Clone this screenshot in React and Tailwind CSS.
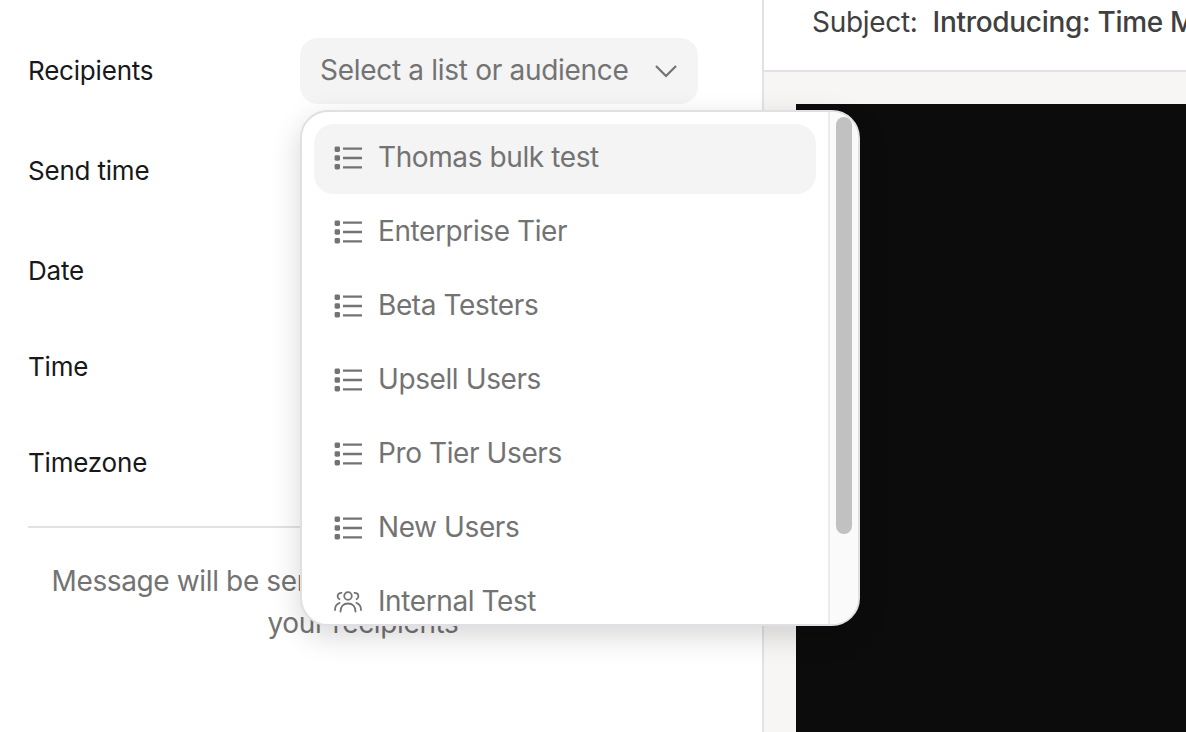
import React from "react";

const listItems = [
    { name: "Thomas bulk test", active: true },
    { name: "Enterprise Tier" },
    { name: "Beta Testers" },
    { name: "Upsell Users" },
    { name: "Pro Tier Users" },
    { name: "New Users" },
    { name: "Internal Test", audience: true },
];

const ListIcon = () => (
    <svg width="28" height="24" viewBox="0 0 28 24" fill="none" className="mt-[2px] shrink-0">
        <rect x="0.6" y="0.6" width="5.4" height="5.4" rx="1.4" fill="#737373" />
        <rect x="0.6" y="9.3" width="5.4" height="5.4" rx="1.4" fill="#737373" />
        <rect x="0.6" y="18" width="5.4" height="5.4" rx="1.4" fill="#737373" />
        <path d="M9 2.6H28M9 12H28M9 21.4H28" stroke="#737373" strokeWidth="2.4" />
    </svg>
);

const AudienceIcon = () => (
    <svg width="28" height="24" viewBox="0 0 28 24" fill="none" stroke="#737373" strokeWidth="1.8" strokeLinecap="round" className="mt-[2px] shrink-0">
        <circle cx="14" cy="6" r="3.8" />
        <path d="M6.5 21.5C6.5 16.5 9.5 13.5 14 13.5C18.5 13.5 21.5 16.5 21.5 21.5" />
        <path d="M7.5 2.8C5 2.8 3.6 4.4 3.6 6.2C3.6 7.6 4.4 8.6 5.4 9.2" />
        <path d="M20.5 2.8C23 2.8 24.4 4.4 24.4 6.2C24.4 7.6 23.6 8.6 22.6 9.2" />
        <path d="M1 20C1 16.4 2.6 13.8 5.6 12.8" />
        <path d="M27 20C27 16.4 25.4 13.8 22.4 12.8" />
    </svg>
);

const Dropdown = () => (
    <div className="absolute left-[300px] top-[110px] z-10 flex h-[516px] w-[560px] overflow-hidden rounded-[28px] border-2 border-[#e0e0e4] bg-white shadow-[0_10px_30px_rgba(0,0,0,0.16)]">
        <div className="flex flex-1 flex-col gap-[4px] overflow-hidden pl-[12px] pr-[12px] pt-[12px]">
            {listItems.map((item) => (
                <div
                    key={item.name}
                    className={`flex h-[70px] shrink-0 items-center gap-[16px] rounded-[20px] pb-[4px] pl-[20px] ${item.active ? "bg-[#f4f4f4]" : ""}`}
                >
                    {item.audience ? <AudienceIcon /> : <ListIcon />}
                    <span className="text-[28px] tracking-[-0.4px] text-[#737373]">{item.name}</span>
                </div>
            ))}
        </div>
        <div className="w-[30px] shrink-0 border-l-2 border-[#ebebeb] bg-[#fafafa] pl-[6px] pt-[5px]">
            <div className="h-[417px] w-[16px] rounded-full bg-[#c1c1c1]" />
        </div>
    </div>
);

const Row = ({ label, className }) => (
    <div className={`flex h-[66px] items-center pb-[2px] text-[26px] tracking-[-0.2px] text-[#18181b] ${className}`}>{label}</div>
);

export default function App() {
    return (
        <div className="relative flex h-[732px] w-[1186px] overflow-hidden bg-white font-['Inter',sans-serif] antialiased">
            <div className="w-[764px] shrink-0 border-r-2 border-[#e2e2e6] pl-[28px] pr-[64px] pt-[38px]">
                <div className="flex h-[66px] items-center justify-between">
                    <span className="pb-[2px] text-[26px] tracking-[-0.2px] text-[#18181b]">Recipients</span>
                    <div className="flex h-[66px] w-[398px] items-center justify-between rounded-[18px] bg-[#f4f4f4] pb-[2px] pl-[20px] pr-[20px] text-[28px] tracking-[-0.3px] text-[#737373]">
                        <span>Select a list or audience</span>
                        <svg width="24" height="14" viewBox="0 0 24 14" fill="none" stroke="#737373" strokeWidth="2.2" className="mt-[2px]">
                            <path d="M2 2L12 12L22 2" />
                        </svg>
                    </div>
                </div>
                <Row label="Send time" className="mt-[34px]" />
                <Row label="Date" className="mt-[34px]" />
                <Row label="Time" className="mt-[30px]" />
                <Row label="Timezone" className="mt-[30px]" />
                <div className="mt-[30px] border-t-2 border-[#e2e2e6] pt-[32px] text-center text-[28px] leading-[42px] tracking-[-0.37px] text-[#737373]">
                    <p className="whitespace-nowrap">Message will be sent at the scheduled time to all</p>
                    <p>your recipients</p>
                </div>
            </div>
            <div className="flex min-w-0 flex-1 flex-col">
                <div className="flex h-[72px] shrink-0 items-start gap-[15px] whitespace-nowrap border-b-2 border-[#e2e2e6] pl-[48px] pt-[1px] text-[28px] tracking-[-0.3px] text-[#404040]">
                    <span>Subject:</span>
                    <span className="font-medium">Introducing: Time Machine</span>
                </div>
                <div className="flex-1 bg-[#f7f6f5] pl-[32px] pt-[32px]">
                    <div className="h-full bg-[#0c0c0c]" />
                </div>
            </div>
            <Dropdown />
        </div>
    );
}
